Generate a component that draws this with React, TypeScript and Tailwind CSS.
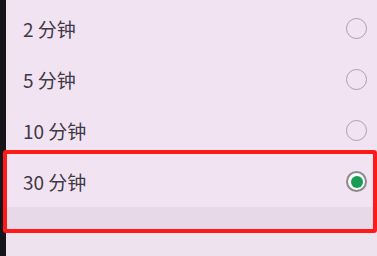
const options = [
  { label: '2 分钟', selected: false },
  { label: '5 分钟', selected: false },
  { label: '10 分钟', selected: false },
  { label: '30 分钟', selected: true },
];

function Radio({ selected }: { selected: boolean }) {
  if (selected) {
    return (
      <span className="flex h-[21px] w-[21px] items-center justify-center rounded-full border-[2px] border-[#8d8891] bg-[#f4fbf6]">
        <span className="h-[12px] w-[12px] rounded-full bg-[#1b9a55]" />
      </span>
    );
  }
  return <span className="h-[21px] w-[21px] rounded-full border-[1.5px] border-[#a9a1ac]" />;
}

export default function App() {
  return (
    <div className="relative flex h-[256px] w-[377px] overflow-hidden bg-[#f2e3f3] font-['Noto_Sans_CJK_SC',sans-serif]">
      {/* left edge of the phone */}
      <div className="w-[6px] shrink-0 bg-[#161418]" />

      <div className="flex flex-1 flex-col pt-[3px]">
        {options.map((opt) => (
          <div
            key={opt.label}
            className="flex h-[51px] items-center justify-between pl-[17px] pr-[10px]"
          >
            <span className="text-[19px] leading-none text-[#3e3944]">{opt.label}</span>
            <Radio selected={opt.selected} />
          </div>
        ))}
        <div className="h-[22px] bg-[#e8d9e8]" />
        <div className="flex-1 bg-[#efe2ef]" />
      </div>

      {/* red highlight annotation */}
      <div className="absolute left-[3px] top-[150px] h-[83px] w-[374px] rounded-[3px] border-[4px] border-[#ff1a1a]" />
    </div>
  );
}
